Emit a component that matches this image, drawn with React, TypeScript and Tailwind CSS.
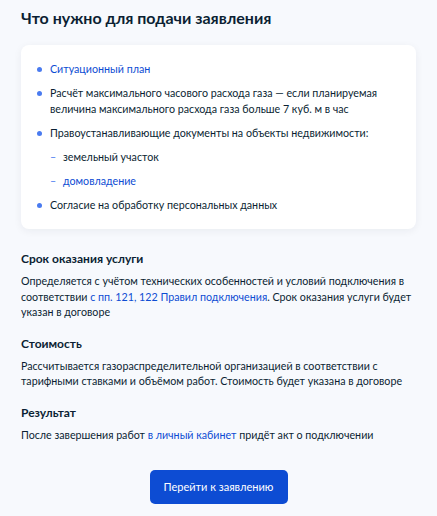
const link = "text-[#0d4cd3]";

function Dot() {
  return <span className="mt-[6px] h-[5px] w-[5px] shrink-0 rounded-full bg-[#4a7bf0]" />;
}

function Dash() {
  return <span className="w-[13px] shrink-0 text-[#4a7bf0]">–</span>;
}

export default function App() {
  return (
    <div
      className="min-h-[516px] bg-[#f7f9fd] px-[21px] pt-[6px] pb-[14px] text-[#0b1f33]"
      style={{ fontFamily: "Lato, 'Noto Sans', sans-serif" }}
    >
      <h1 className="text-[16px] leading-[24px] font-bold">Что нужно для подачи заявления</h1>

      <div className="mt-[15px] rounded-[8px] bg-white p-4 text-[10.7px] leading-[16px] shadow-[0_2px_8px_rgba(11,31,51,0.06)]">
        <ul className="flex flex-col gap-2">
          <li className="flex gap-[8px]">
            <Dot />
            <span className={link}>Ситуационный план</span>
          </li>
          <li className="flex gap-[8px]">
            <Dot />
            <span>
              Расчёт максимального часового расхода газа — если планируемая величина максимального расхода газа больше 7
              куб. м в час
            </span>
          </li>
          <li className="flex gap-[8px]">
            <Dot />
            <span>Правоустанавливающие документы на объекты недвижимости:</span>
          </li>
          <li className="flex pl-[13px]">
            <Dash />
            <span>земельный участок</span>
          </li>
          <li className="flex pl-[13px]">
            <Dash />
            <span className={link}>домовладение</span>
          </li>
          <li className="flex gap-[8px]">
            <Dot />
            <span>Согласие на обработку персональных данных</span>
          </li>
        </ul>
      </div>

      <div className="mt-[20px] text-[10.7px] leading-[15.5px]">
        <h2 className="text-[12px] leading-[20px] font-bold">Срок оказания услуги</h2>
        <p className="mt-[4px]">
          Определяется с учётом технических особенностей и условий подключения в соответствии{" "}
          <a className={link}>с пп. 121, 122 Правил подключения</a>. Срок оказания услуги будет указан в договоре
        </p>

        <h2 className="mt-[14px] text-[12px] leading-[20px] font-bold">Стоимость</h2>
        <p className="mt-[4px]">
          Рассчитывается газораспределительной организацией в соответствии с тарифными ставками и объёмом работ.
          Стоимость будет указана в договоре
        </p>

        <h2 className="mt-[14px] text-[12px] leading-[20px] font-bold">Результат</h2>
        <p className="mt-[4px]">
          После завершения работ <a className={link}>в личный кабинет</a> придёт акт о подключении
        </p>
      </div>

      <div className="mt-[28px] flex justify-center">
        <button className="h-[34px] w-[138px] rounded-[5px] bg-[#0d4cd3] text-[11px] text-white">
          Перейти к заявлению
        </button>
      </div>
    </div>
  );
}
